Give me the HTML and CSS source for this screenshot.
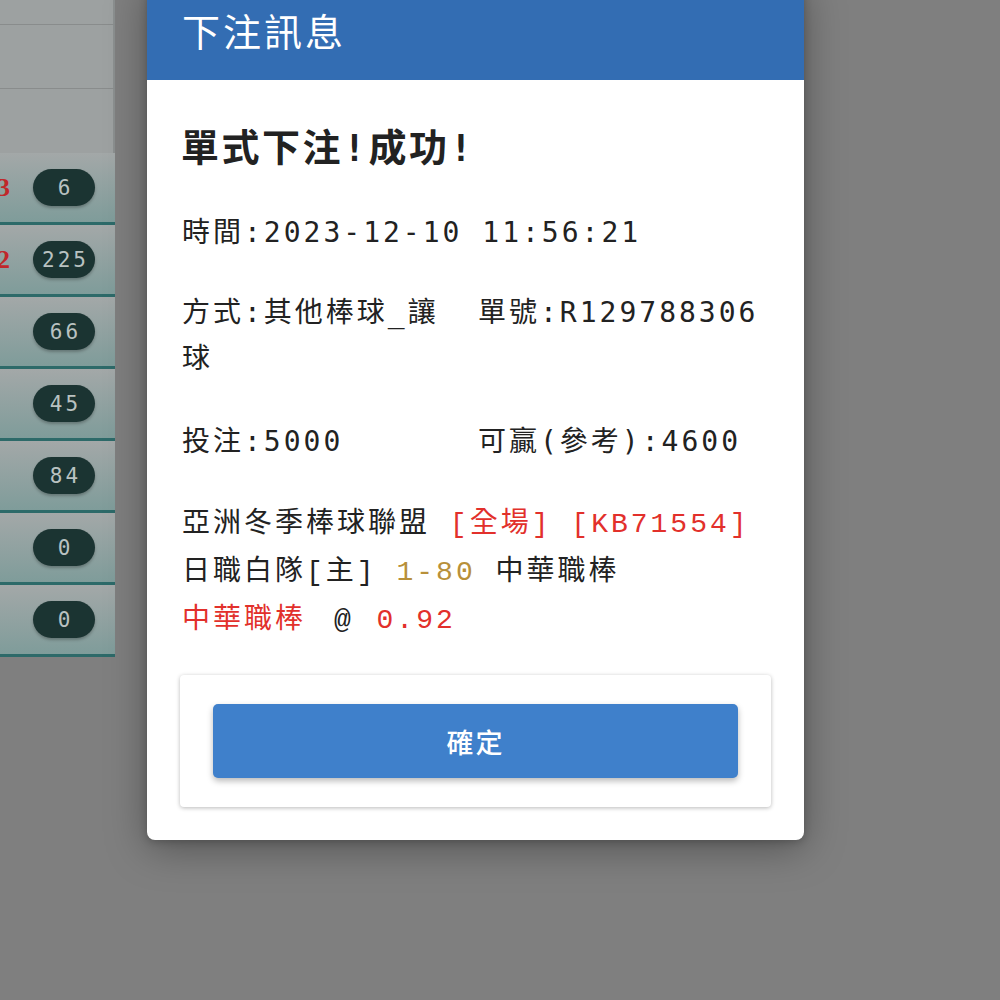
FILE: index.html
```html
<!DOCTYPE html>
<html lang="zh-Hant">
<head>
<meta charset="utf-8">
<title>下注訊息</title>
<link rel="stylesheet" href="styles.css">
</head>
<body>
<div class="page">
  <aside class="table">
    <div class="hrow h1"></div>
    <div class="hrow h2"></div>
    <div class="hrow h3"></div>
    <div class="row"><span class="odds">3</span><span class="badge">6</span></div>
    <div class="row"><span class="odds">2</span><span class="badge">225</span></div>
    <div class="row"><span class="odds"></span><span class="badge">66</span></div>
    <div class="row"><span class="odds"></span><span class="badge">45</span></div>
    <div class="row"><span class="odds"></span><span class="badge">84</span></div>
    <div class="row"><span class="odds"></span><span class="badge">0</span></div>
    <div class="row"><span class="odds"></span><span class="badge">0</span></div>
  </aside>

  <div class="dialog">
    <header class="dialog-head">下注訊息</header>
    <div class="dialog-body">
      <h2 class="result">單式下注!成功!</h2>
      <p class="line">時間:2023-12-10 11:56:21</p>
      <div class="line grid way">
        <span>方式:其他棒球_讓球</span>
        <span>單號:R129788306</span>
      </div>
      <div class="line grid">
        <span>投注:5000</span>
        <span>可贏(參考):4600</span>
      </div>
      <div class="line detail">
        <div class="dl">亞洲冬季棒球聯盟 <span class="red cour">[全場]</span> <span class="red cour">[KB71554]</span></div>
        <div class="dl">日職白隊<span class="cour">[</span>主<span class="cour">]</span> <span class="gold cour">1-80</span> 中華職棒</div>
        <div class="dl"><span class="red">中華職棒</span> <span class="cour at">@</span> <span class="red cour rate">0.92</span></div>
      </div>
      <div class="card">
        <button class="ok" type="button">確定</button>
      </div>
    </div>
  </div>
</div>
</body>
</html>
```

FILE: styles.css
```css
html, body {
  margin: 0;
  padding: 0;
}
body {
  width: 1000px;
  height: 1000px;
  overflow: hidden;
  background: #7f7f7f;
  font-family: "DejaVu Sans Mono", "Noto Sans CJK TC", monospace;
}
.page {
  position: relative;
  width: 1000px;
  height: 1000px;
}

/* dimmed table behind the dialog */
.table {
  width: 115px;
  display: flex;
  flex-direction: column;
  overflow: hidden;
}
.hrow {
  background: #9da1a1;
  border-right: 2px solid #8b8f8f;
  border-bottom: 1px solid #898c8c;
  box-sizing: border-box;
}
.h1 { height: 25px; }
.h2 { height: 64px; }
.h3 { height: 64px; border-bottom: none; }
.row {
  height: 72px;
  box-sizing: border-box;
  border-bottom: 3px solid #2d6a69;
  background: linear-gradient(#a3a8a8, #7f9c9a);
  display: flex;
  align-items: center;
}
.odds {
  width: 13px;
  margin-left: -3px;
  text-align: right;
  font-family: "Liberation Serif", serif;
  font-weight: 700;
  font-size: 26px;
  color: #c0272a;
}
.badge {
  margin-left: 23px;
  width: 62px;
  height: 37px;
  border-radius: 19px;
  background: #1b3432;
  color: #b9c2c1;
  font-family: "DejaVu Sans Mono", monospace;
  font-size: 21px;
  letter-spacing: 3px;
  text-indent: 3px;
  display: flex;
  align-items: center;
  justify-content: center;
  box-shadow: 0 2px 3px rgba(0,0,0,0.25);
}

/* dialog */
.dialog {
  position: absolute;
  left: 147px;
  top: -20px;
  width: 657px;
  background: #ffffff;
  border-radius: 8px;
  box-shadow: 0 8px 40px rgba(0,0,0,0.35), 0 2px 8px rgba(0,0,0,0.2);
  overflow: hidden;
}
.dialog-head {
  background: #336db3;
  color: #ffffff;
  height: 100px;
  box-sizing: border-box;
  padding: 20px 0 0 35px;
  font-family: "Noto Sans CJK TC", sans-serif;
  font-size: 38px;
  line-height: 60px;
  letter-spacing: 3px;
  font-weight: 400;
}
.dialog-body {
  padding: 43px 33px 33px 33px;
  color: #222222;
}
.result {
  margin: 0 0 37px 0;
  padding-left: 1px;
  font-family: "DejaVu Sans Mono", "Noto Sans CJK TC", monospace;
  font-size: 38px;
  line-height: 50px;
  font-weight: 700;
  letter-spacing: 2.5px;
}
.line {
  margin: 0 0 34px 0;
  padding-left: 2px;
  font-size: 28px;
  line-height: 46px;
  letter-spacing: 3px;
}
.way {
  margin-bottom: 37px;
}
.grid {
  display: grid;
  grid-template-columns: 296px 1fr;
}
.grid > span:first-child {
  padding-right: 10px;
}
.detail {
  margin-bottom: 32px;
}
.dl {
  height: 48px;
  line-height: 48px;
  white-space: nowrap;
}
.cour {
  font-family: "Liberation Mono", "Noto Sans CJK TC", monospace;
}
.at {
  margin-left: 8px;
}
.rate {
  margin-left: 3px;
}
.red { color: #e2302b; }
.gold { color: #b8903a; }

.card {
  border-radius: 4px;
  box-shadow: 0 1px 4px rgba(0,0,0,0.28);
  padding: 29px 33px;
  background: #ffffff;
}
.ok {
  display: block;
  width: 100%;
  height: 74px;
  border: none;
  border-radius: 5px;
  background: #3f80cb;
  color: #ffffff;
  font-family: "Noto Sans CJK TC", sans-serif;
  font-size: 27px;
  font-weight: 500;
  letter-spacing: 2px;
  box-shadow: 0 3px 6px rgba(0,0,0,0.28);
  cursor: pointer;
}
```
